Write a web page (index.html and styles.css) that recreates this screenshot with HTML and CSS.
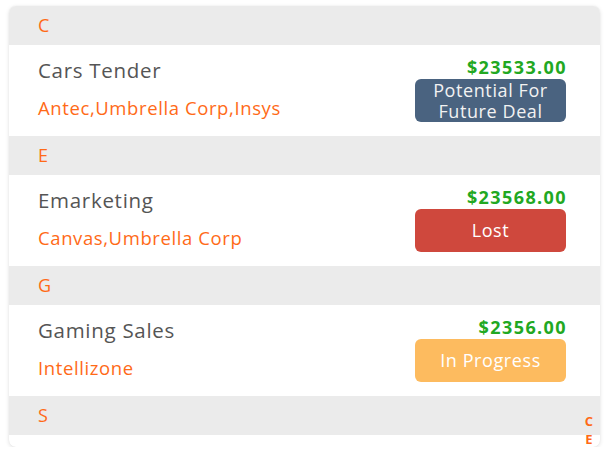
FILE: index.html
```html
<!DOCTYPE html>
<html>
<head>
<meta charset="utf-8">
<link rel="stylesheet" href="styles.css">
</head>
<body>
<div class="card">
  <div class="section">C</div>
  <div class="row">
    <div class="info">
      <div class="title">Cars Tender</div>
      <div class="sub">Antec,Umbrella Corp,Insys</div>
    </div>
    <div class="right">
      <div class="amount">$23533.00</div>
      <div class="badge blue">Potential For<br>Future Deal</div>
    </div>
  </div>
  <div class="section">E</div>
  <div class="row">
    <div class="info">
      <div class="title">Emarketing</div>
      <div class="sub">Canvas,Umbrella Corp</div>
    </div>
    <div class="right">
      <div class="amount">$23568.00</div>
      <div class="badge red">Lost</div>
    </div>
  </div>
  <div class="section">G</div>
  <div class="row">
    <div class="info">
      <div class="title">Gaming Sales</div>
      <div class="sub">Intellizone</div>
    </div>
    <div class="right">
      <div class="amount">$2356.00</div>
      <div class="badge yellow">In Progress</div>
    </div>
  </div>
  <div class="section">S</div>
  <div class="tail"></div>
  <div class="index">
    <span>C</span>
    <span>E</span>
  </div>
</div>
</body>
</html>
```
FILE: styles.css
```css
html, body {
  margin: 0;
  padding: 0;
  background: #ffffff;
  font-family: "Open Sans", "Lato", sans-serif;
}
body {
  padding: 6px 8px 0 9px;
}
.card {
  position: relative;
  width: 591px;
  border-radius: 7px;
  overflow: hidden;
  background: #ffffff;
  box-shadow: 0 1px 4px rgba(0, 0, 0, 0.12), 0 0 1px rgba(0, 0, 0, 0.08);
}
.section {
  height: 39px;
  box-sizing: border-box;
  background: #ebebeb;
  color: #ff6a17;
  font-size: 18px;
  line-height: 39px;
  padding-left: 29px;
  padding-bottom: 5px;
  letter-spacing: 0.5px;
}
.row {
  height: 91px;
  display: flex;
  justify-content: space-between;
  padding: 0 34px 0 29px;
}
.info {
  display: flex;
  flex-direction: column;
}
.title {
  margin-top: 11px;
  color: #555555;
  font-size: 20.5px;
  line-height: 28px;
  letter-spacing: 0.7px;
}
.sub {
  margin-top: 12px;
  color: #ff6a17;
  font-size: 18.5px;
  line-height: 24px;
  letter-spacing: 0.6px;
}
.right {
  display: flex;
  flex-direction: column;
  align-items: flex-end;
}
.amount {
  margin-top: 11px;
  color: #22a822;
  font-weight: 700;
  font-size: 18px;
  line-height: 22px;
  letter-spacing: 1.4px;
  margin-right: -1px;
}
.badge {
  margin-top: 1px;
  width: 151px;
  height: 43px;
  border-radius: 6px;
  display: flex;
  align-items: center;
  justify-content: center;
  text-align: center;
  color: #ffffff;
  font-size: 18px;
  line-height: 21px;
  letter-spacing: 0.6px;
}
.blue {
  background: #4a6380;
  color: #f2f2f2;
}
.red {
  background: #cf483d;
}
.yellow {
  background: #fdbb5f;
}
.tail {
  height: 12px;
}
.index {
  position: absolute;
  right: 7px;
  bottom: 0;
  display: flex;
  flex-direction: column;
  align-items: center;
  gap: 2px;
  color: #ff6a17;
  font-weight: 700;
  font-size: 13px;
  line-height: 16px;
}
```
